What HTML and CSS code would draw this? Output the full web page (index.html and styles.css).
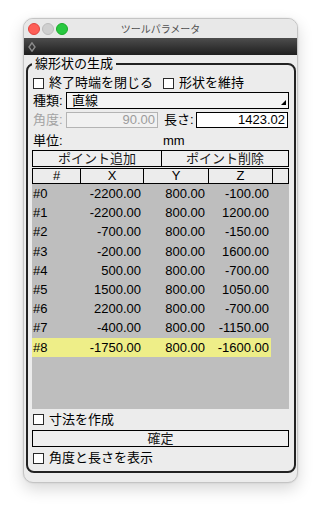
FILE: index.html
```html
<!DOCTYPE html>
<html lang="ja">
<head>
<meta charset="utf-8">
<title>ツールパラメータ</title>
<link rel="stylesheet" href="styles.css">
</head>
<body>
<div class="stage">
  <div class="window">
    <div class="titlebar">
      <div class="lights">
        <span class="light red"></span>
        <span class="light grey"></span>
        <span class="light green"></span>
      </div>
      <div class="title">ツールパラメータ</div>
      <div></div>
    </div>
    <div class="toolbar">
      <svg class="tool-icon" width="8" height="10" viewBox="0 0 8 10"><path d="M4 0.8 L7 5 L4 9.2 L1 5 Z" fill="none" stroke="#8c8c8c" stroke-width="1.4"/></svg>
    </div>
    <div class="content">
      <fieldset class="group">
        <legend>線形状の生成</legend>
        <div class="row checks">
          <label class="cb"><span class="box"></span><span>終了時端を閉じる</span></label>
          <label class="cb cb-second"><span class="box"></span><span>形状を維持</span></label>
        </div>
        <div class="row select-row">
          <span class="lbl">種類:</span>
          <div class="select"><span>直線</span><span class="arrow"></span></div>
        </div>
        <div class="row angle-row">
          <span class="lbl dim">角度:</span>
          <div class="input disabled">90.00</div>
          <span class="lbl len-lbl">長さ:</span>
          <div class="input">1423.02</div>
        </div>
        <div class="row unit-row">
          <span class="unit-lbl">単位:</span>
          <span>mm</span>
        </div>
        <div class="btnrow">
          <div class="btn">ポイント追加</div>
          <div class="btn">ポイント削除</div>
        </div>
        <div class="thead">
          <div class="th">#</div>
          <div class="th">X</div>
          <div class="th">Y</div>
          <div class="th">Z</div>
          <div class="th last"></div>
        </div>
        <div class="tbody">
          <div class="trow"><span class="c1">#0</span><span class="c2">-2200.00</span><span class="c3">800.00</span><span class="c4">-100.00</span></div>
          <div class="trow"><span class="c1">#1</span><span class="c2">-2200.00</span><span class="c3">800.00</span><span class="c4">1200.00</span></div>
          <div class="trow"><span class="c1">#2</span><span class="c2">-700.00</span><span class="c3">800.00</span><span class="c4">-150.00</span></div>
          <div class="trow"><span class="c1">#3</span><span class="c2">-200.00</span><span class="c3">800.00</span><span class="c4">1600.00</span></div>
          <div class="trow"><span class="c1">#4</span><span class="c2">500.00</span><span class="c3">800.00</span><span class="c4">-700.00</span></div>
          <div class="trow"><span class="c1">#5</span><span class="c2">1500.00</span><span class="c3">800.00</span><span class="c4">1050.00</span></div>
          <div class="trow"><span class="c1">#6</span><span class="c2">2200.00</span><span class="c3">800.00</span><span class="c4">-700.00</span></div>
          <div class="trow"><span class="c1">#7</span><span class="c2">-400.00</span><span class="c3">800.00</span><span class="c4">-1150.00</span></div>
          <div class="trow selected"><span class="c1">#8</span><span class="c2">-1750.00</span><span class="c3">800.00</span><span class="c4">-1600.00</span></div>
        </div>
        <div class="row cb-row">
          <label class="cb"><span class="box"></span><span>寸法を作成</span></label>
        </div>
        <div class="btn full">確定</div>
        <div class="row cb-row2">
          <label class="cb"><span class="box"></span><span>角度と長さを表示</span></label>
        </div>
      </fieldset>
    </div>
  </div>
</div>
</body>
</html>
```
FILE: styles.css
```css
* { box-sizing: border-box; }
html, body { margin: 0; padding: 0; }
body {
  width: 321px;
  height: 510px;
  overflow: hidden;
  background: #ffffff;
  font-family: "Liberation Sans", "Noto Sans CJK JP", sans-serif;
  font-size: 13px;
  color: #000;
}
.stage { padding: 18px 0 0 23px; }
.window {
  width: 275px;
  height: 465px;
  border: 1px solid #c4c4c4;
  border-radius: 10px;
  background: #ececec;
  box-shadow: 0 6px 16px rgba(0,0,0,0.16), 0 0 2px rgba(0,0,0,0.12);
  overflow: hidden;
  display: flex;
  flex-direction: column;
}
.titlebar {
  height: 19px;
  flex: none;
  display: grid;
  grid-template-columns: 1fr auto 1fr;
  align-items: center;
  background: #e8e8e8;
}
.lights { display: flex; gap: 2px; padding-left: 4px; }
.light { width: 12px; height: 12px; border-radius: 50%; }
.red { background: #fe5f57; border: 0.5px solid #e0443e; }
.grey { background: #cfcfcf; border: 0.5px solid #bcbcbc; }
.green { background: #28c840; border: 0.5px solid #1aab29; }
.title {
  font-size: 10px;
  line-height: 19px;
  color: #4f4f4f;
  font-family: "Noto Sans CJK JP", sans-serif;
}
.toolbar {
  height: 17px;
  flex: none;
  display: flex;
  align-items: center;
  padding-left: 4px;
  background: linear-gradient(#4d4d4d, #1f1f1f);
}
.tool-icon { display: block; }
.content { flex: 1; }
.group {
  margin: 1px 1px 0 2px;
  padding: 2px 5px 4px 4px;
  border: 2px solid #222;
  border-radius: 8px;
  min-width: 0;
}
.group legend {
  padding: 0 3px;
  margin-left: 0;
  line-height: 16px;
  font-size: 13px;
}
.row { display: flex; align-items: center; }
.cb { display: flex; align-items: center; gap: 5px; line-height: 16px; }
.box {
  width: 11px;
  height: 11px;
  border: 1px solid #2a2a2a;
  background: #fff;
  margin-left: 1px;
}
.cb-second { margin-left: 9px; }
.checks { height: 18px; }
.select-row { height: 17px; }
.lbl { width: 34px; padding-left: 1px; line-height: 16px; }
.dim { color: #a3a3a3; }
.select {
  flex: 1;
  height: 17px;
  border: 1px solid #000;
  background: #f4f4f4;
  display: flex;
  justify-content: space-between;
  padding-left: 5px;
  line-height: 15px;
}
.arrow {
  align-self: flex-end;
  margin: 0 2px 3px 0;
  width: 0;
  height: 0;
  border-left: 5px solid transparent;
  border-bottom: 5px solid #000;
}
.angle-row { height: 16px; margin-top: 3px; }
.input {
  width: 92px;
  height: 16px;
  border: 1px solid #000;
  background: #fff;
  text-align: right;
  padding-right: 2px;
  line-height: 14px;
}
.input.disabled { border-color: #b4b4b4; color: #9c9c9c; background: #f1f1f1; }
.len-lbl { margin-left: 6px; width: 32px; padding-left: 0; }
.unit-row { height: 22px; padding-top: 3px; line-height: 16px; }
.unit-lbl { width: 131px; padding-left: 1px; }
.btnrow {
  display: grid;
  grid-template-columns: 130px 1fr;
  height: 17px;
}
.btn {
  border: 1px solid #000;
  background: #efefef;
  text-align: center;
  line-height: 15px;
  color: #1a1a1a;
}
.btnrow .btn + .btn { border-left: none; }
.thead {
  margin-top: 1px;
  display: grid;
  grid-template-columns: 48px 63px 65px 64px 1fr;
  height: 16px;
  border: 1px solid #000;
}
.th {
  border-right: 1px solid #000;
  text-align: center;
  line-height: 14px;
}
.th.last { border-right: none; }
.tbody {
  height: 225px;
  background: #bebebe;
}
.trow {
  display: grid;
  grid-template-columns: 49px 63px 65px 62px;
  width: 239px;
  height: 19.2px;
  line-height: 19.2px;
}
.trow.selected { background: #eeee88; }
.c1 { padding-left: 1px; }
.c2 { text-align: right; padding-right: 3px; }
.c3 { text-align: right; padding-right: 4px; }
.c4 { text-align: right; padding-right: 2px; }
.cb-row { height: 21px; }
.btn.full { height: 17px; }
.cb-row2 { height: 18px; margin-top: 2px; }
```
